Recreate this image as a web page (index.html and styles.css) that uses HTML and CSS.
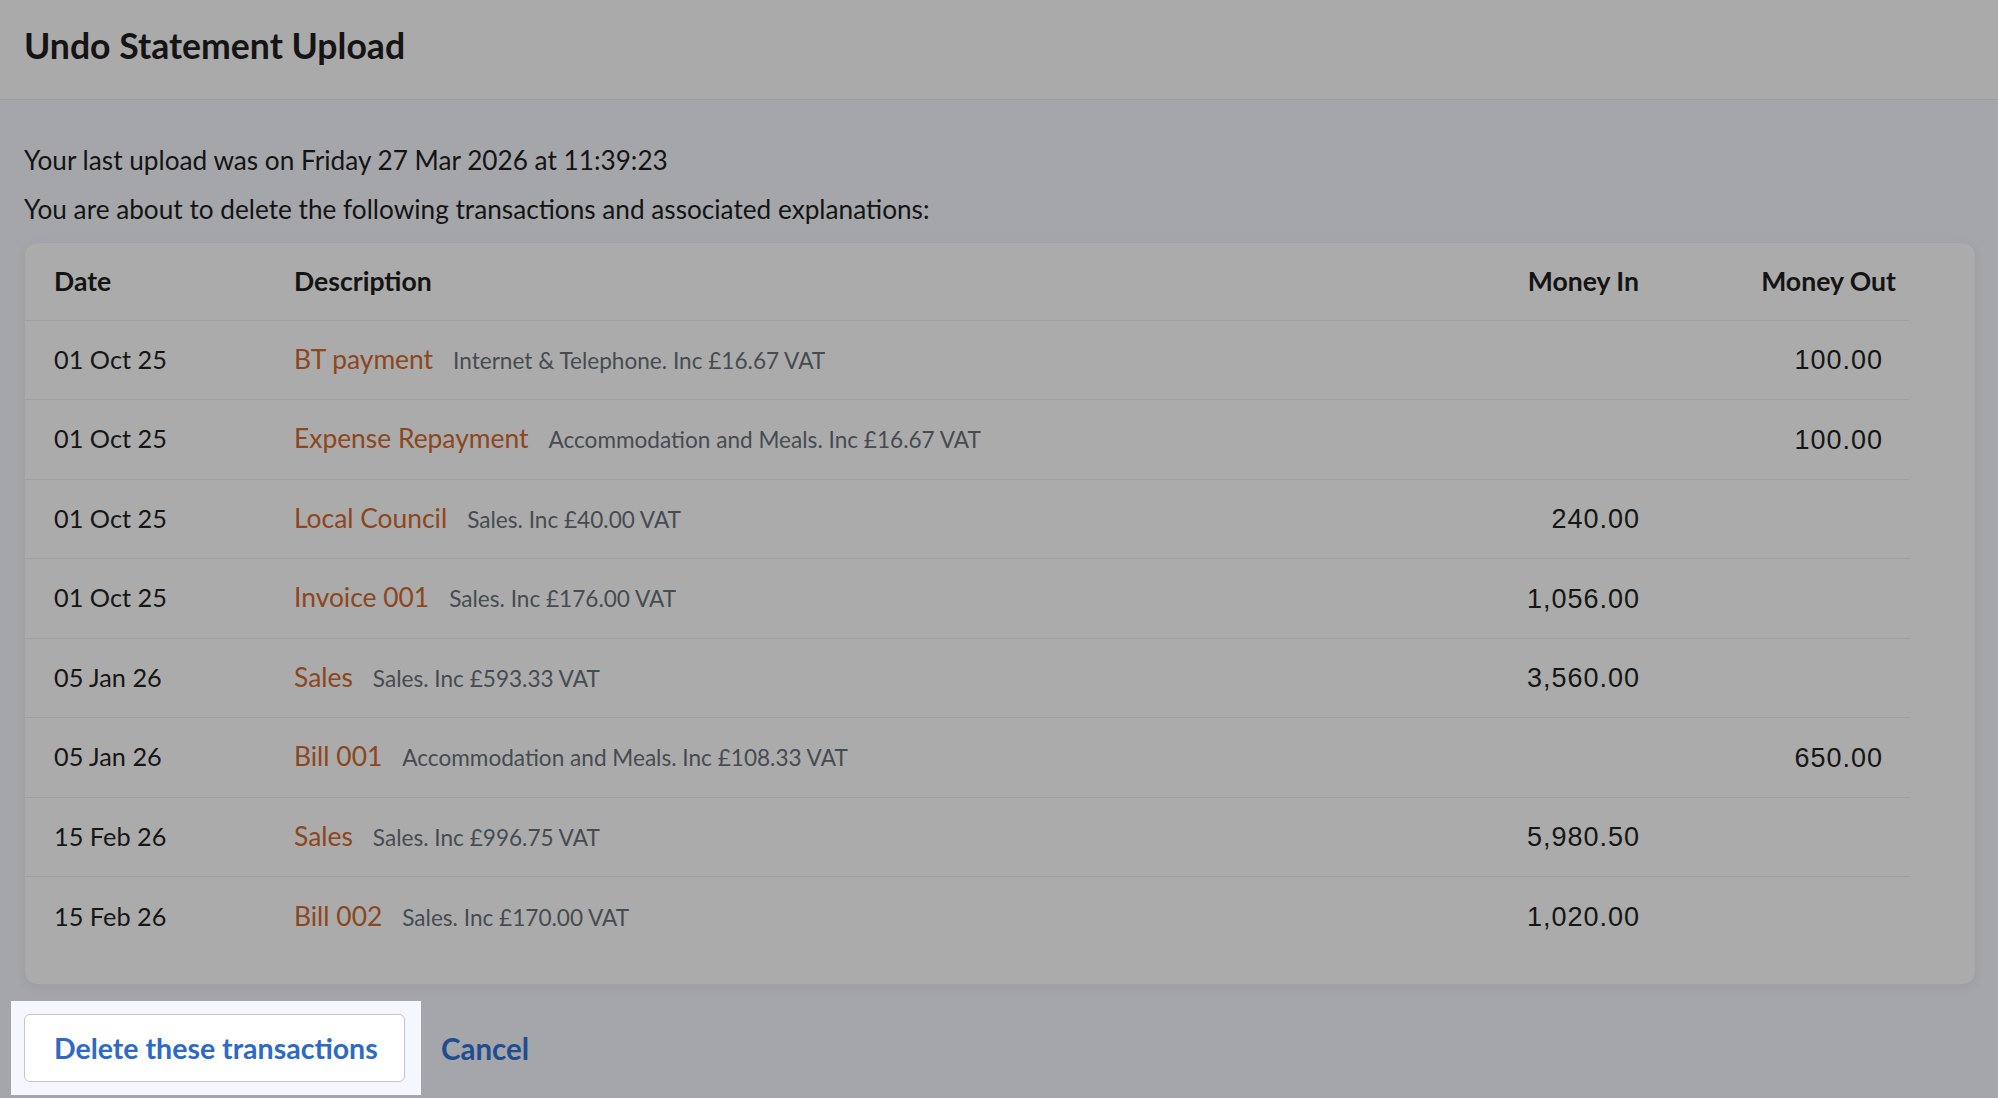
FILE: index.html
```html
<!DOCTYPE html>
<html lang="en">
<head>
<meta charset="utf-8">
<title>Undo Statement Upload</title>
<link rel="stylesheet" href="styles.css">
</head>
<body>
<header class="page-header">
  <h1 class="page-title">Undo Statement Upload</h1>
</header>
<main class="content">
  <p class="intro">Your last upload was on Friday 27 Mar 2026 at 11:39:23</p>
  <p class="intro">You are about to delete the following transactions and associated explanations:</p>
  <div class="card">
    <table class="tx">
      <colgroup>
        <col class="c-date">
        <col class="c-desc">
        <col class="c-in">
        <col class="c-out">
      </colgroup>
      <thead>
        <tr>
          <th class="th-date">Date</th>
          <th class="th-desc">Description</th>
          <th class="th-in">Money In</th>
          <th class="th-out">Money Out</th>
        </tr>
      </thead>
      <tbody>
        <tr>
          <td class="date">01 Oct 25</td>
          <td class="desc"><a class="link" href="#">BT payment</a><span class="expl">Internet &amp; Telephone. Inc £16.67 VAT</span></td>
          <td class="in"></td>
          <td class="out">100.00</td>
        </tr>
        <tr>
          <td class="date">01 Oct 25</td>
          <td class="desc"><a class="link" href="#">Expense Repayment</a><span class="expl">Accommodation and Meals. Inc £16.67 VAT</span></td>
          <td class="in"></td>
          <td class="out">100.00</td>
        </tr>
        <tr>
          <td class="date">01 Oct 25</td>
          <td class="desc"><a class="link" href="#">Local Council</a><span class="expl">Sales. Inc £40.00 VAT</span></td>
          <td class="in">240.00</td>
          <td class="out"></td>
        </tr>
        <tr>
          <td class="date">01 Oct 25</td>
          <td class="desc"><a class="link" href="#">Invoice 001</a><span class="expl">Sales. Inc £176.00 VAT</span></td>
          <td class="in">1,056.00</td>
          <td class="out"></td>
        </tr>
        <tr>
          <td class="date">05 Jan 26</td>
          <td class="desc"><a class="link" href="#">Sales</a><span class="expl">Sales. Inc £593.33 VAT</span></td>
          <td class="in">3,560.00</td>
          <td class="out"></td>
        </tr>
        <tr>
          <td class="date">05 Jan 26</td>
          <td class="desc"><a class="link" href="#">Bill 001</a><span class="expl">Accommodation and Meals. Inc £108.33 VAT</span></td>
          <td class="in"></td>
          <td class="out">650.00</td>
        </tr>
        <tr>
          <td class="date">15 Feb 26</td>
          <td class="desc"><a class="link" href="#">Sales</a><span class="expl">Sales. Inc £996.75 VAT</span></td>
          <td class="in">5,980.50</td>
          <td class="out"></td>
        </tr>
        <tr>
          <td class="date">15 Feb 26</td>
          <td class="desc"><a class="link" href="#">Bill 002</a><span class="expl">Sales. Inc £170.00 VAT</span></td>
          <td class="in">1,020.00</td>
          <td class="out"></td>
        </tr>
      </tbody>
    </table>
  </div>
  <div class="actions">
    <div class="spotlight">
      <button class="btn" type="button">Delete these transactions</button>
    </div>
    <a class="cancel" href="#">Cancel</a>
  </div>
</main>
</body>
</html>
```
FILE: styles.css
```css
* { box-sizing: border-box; }

html, body {
  margin: 0;
  padding: 0;
}

body {
  background: #a5a6aa;
  font-family: "Lato", "Liberation Sans", sans-serif;
  color: #151515;
  width: 1998px;
  height: 1098px;
  overflow: hidden;
}

.page-header {
  height: 100px;
  background: #aaaaaa;
  border-bottom: 1px solid #9c9da0;
  padding: 26px 24px 0;
}

.page-title {
  margin: 0;
  font-size: 35.6px;
  line-height: 40px;
  font-weight: 700;
  color: #141414;
}

.content {
  padding: 36px 22px 0 24px;
}

.intro {
  margin: 0;
  font-size: 26.2px;
  line-height: 49px;
  color: #141414;
}

.card {
  margin-top: 8px;
  background: #ababab;
  border: 1px solid #a0a1a4;
  border-radius: 13px;
  box-shadow: 0 3px 8px rgba(60, 64, 72, 0.08);
  padding-bottom: 28px;
}

.tx {
  width: 1885px;
  border-collapse: collapse;
  table-layout: fixed;
}

.c-date { width: 240px; }
.c-desc { width: 1145px; }
.c-in { width: 250px; }
.c-out { width: 250px; }

.tx th {
  height: 77px;
  font-size: 26.6px;
  font-weight: 700;
  text-align: left;
  color: #141414;
  border-bottom: 1px solid #9e9fa2;
  vertical-align: middle;
}

.tx td {
  height: 79.5px;
  font-size: 25.3px;
  color: #161616;
  vertical-align: middle;
  border-bottom: 1px solid #9e9fa2;
  white-space: nowrap;
}

.tx tbody tr:last-child td { border-bottom: none; }

.th-date, .date { padding-left: 29px; }
.th-desc, .desc { padding-left: 29px; }
.date, .desc { padding-bottom: 3px; }

.th-in, .th-out { text-align: right !important; }
.th-in { padding-right: 21px; }
.th-out { padding-right: 14px; }

.in, .out {
  text-align: right;
  font-family: "Liberation Sans", "Arial", sans-serif;
  font-size: 27px !important;
  letter-spacing: 1px;
  padding-top: 3px;
}
.in { padding-right: 20px; }
.out { padding-right: 27px; }

.link {
  color: #8c4620;
  text-decoration: none;
  font-size: 26.4px;
}

.expl {
  margin-left: 20px;
  font-size: 22.6px;
  color: #464b52;
}

.actions {
  margin-top: 16px;
  display: flex;
  align-items: center;
  gap: 20px;
}

.spotlight {
  margin-left: -13px;
  padding: 13px 16px 13px 13px;
  background: #f4f7fd;
}

.btn {
  display: block;
  width: 381px;
  height: 68px;
  padding: 0 0 0 29px;
  text-align: left;
  background: #ffffff;
  border: 1px solid #c3c7cd;
  border-radius: 6px;
  font-family: "Lato", "Liberation Sans", sans-serif;
  font-size: 28.5px;
  font-weight: 700;
  color: #2c6ac6;
  cursor: pointer;
}

.cancel {
  font-size: 29.5px;
  font-weight: 700;
  color: #1f4d90;
  text-decoration: none;
}
```
